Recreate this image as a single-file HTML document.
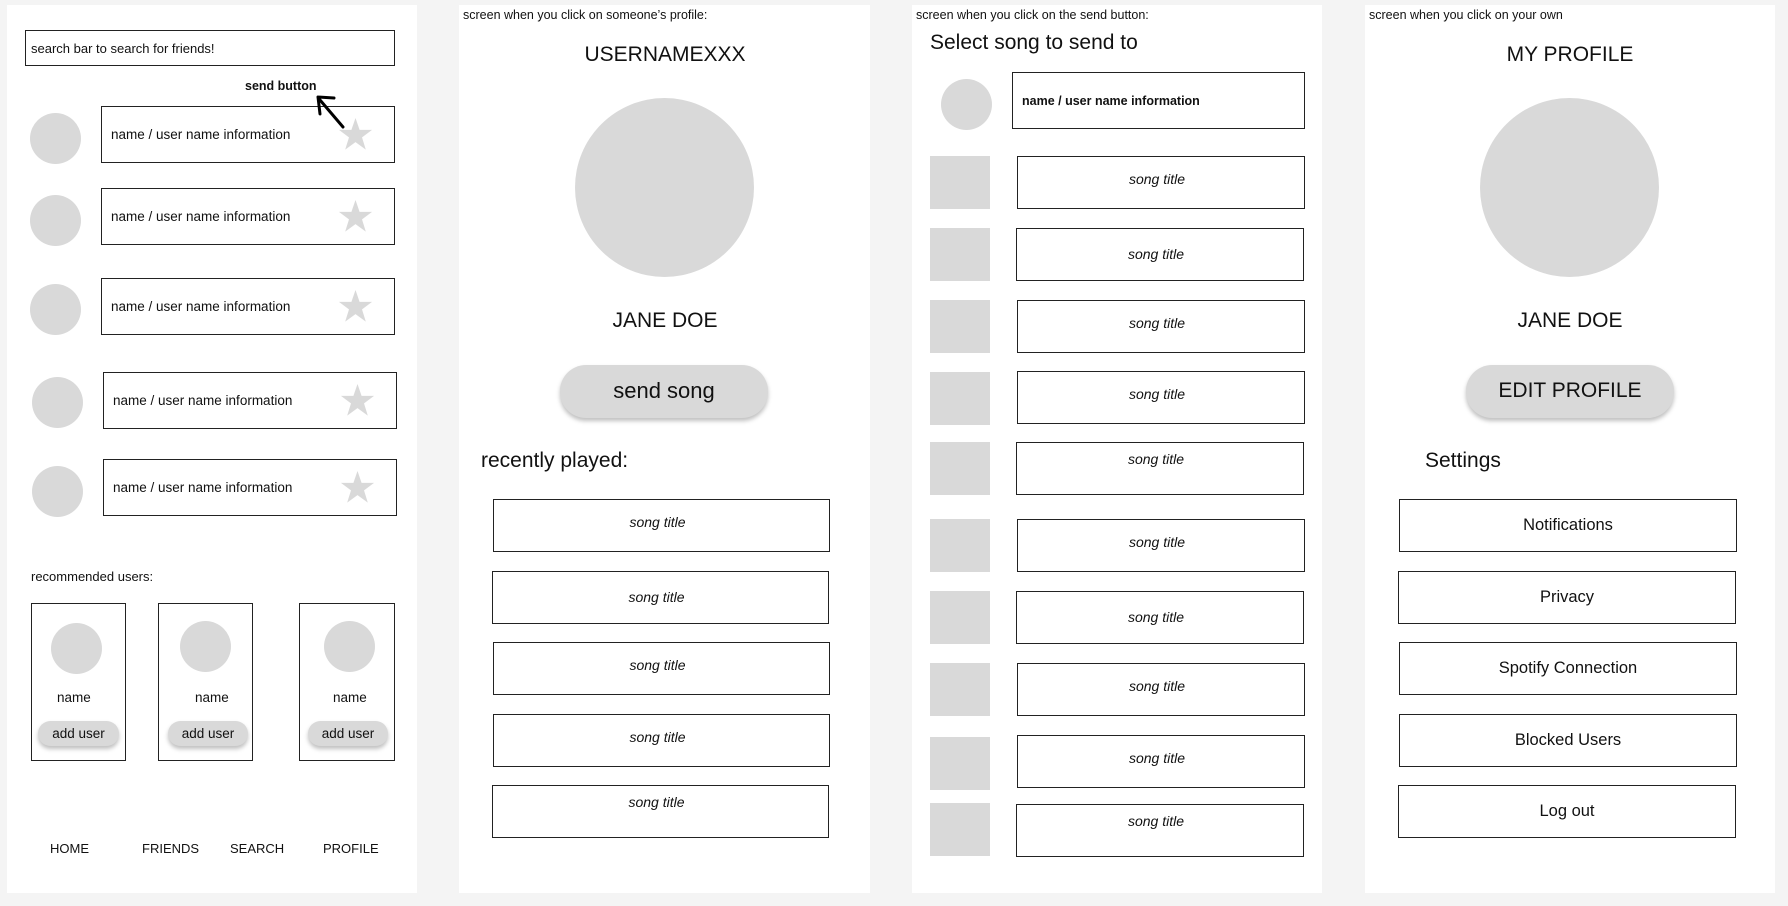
<!DOCTYPE html>
<html><head><meta charset="utf-8"><style>
*{margin:0;padding:0;box-sizing:border-box}
body{width:1788px;height:906px;background:#f4f4f4;position:relative;overflow:hidden;font-family:"Liberation Sans",Arial,sans-serif;color:#111}
.p{position:absolute;background:#fff;top:5px;height:888px}
.a{position:absolute}
.c{position:absolute;border-radius:50%;background:#d9d9d9}
.b{position:absolute;border:1.3px solid #222;background:#fff}
.t{position:absolute;white-space:nowrap}
.row{font-size:13.5px;display:flex;align-items:center;padding-left:9px}
.star{position:absolute;right:21px;top:10px;width:35px;height:35px}
.song{font-style:italic;font-size:14px;text-align:center;padding-top:14px;padding-right:8px}
.sq{position:absolute;background:#d9d9d9;left:930px;width:60px;height:53px}
.pill{position:absolute;background:#d9d9d9;border-radius:26px;box-shadow:0 3px 4px rgba(0,0,0,.25);text-align:center}
.set{font-size:16.5px;text-align:center;display:flex;align-items:center;justify-content:center}
</style></head><body>
<div class="p" style="left:7px;width:410px"></div>
<div class="p" style="left:459px;width:411px"></div>
<div class="p" style="left:912px;width:410px"></div>
<div class="p" style="left:1365px;width:410px"></div>

<!-- Panel 1 -->
<div class="b row" style="left:25px;top:30px;width:370px;height:36px;font-size:13px;padding-left:5px">search bar to search for friends!</div>
<div class="t" style="left:245px;top:79px;font-size:12.5px;font-weight:bold">send button</div>

<div class="c" style="left:30px;top:113px;width:51px;height:51px"></div>
<div class="b row" style="left:101px;top:106px;width:294px;height:57px">name / user name information<svg class="star" viewBox="0 0 36 36"><path d="M18 1 L22.2 13.2 L35 13.2 L24.7 20.9 L28.6 33.5 L18 25.8 L7.4 33.5 L11.3 20.9 L1 13.2 L13.8 13.2Z" fill="#d9d9d9"/></svg></div>
<div class="c" style="left:30px;top:195px;width:51px;height:51px"></div>
<div class="b row" style="left:101px;top:188px;width:294px;height:57px">name / user name information<svg class="star" viewBox="0 0 36 36"><path d="M18 1 L22.2 13.2 L35 13.2 L24.7 20.9 L28.6 33.5 L18 25.8 L7.4 33.5 L11.3 20.9 L1 13.2 L13.8 13.2Z" fill="#d9d9d9"/></svg></div>
<div class="c" style="left:30px;top:284px;width:51px;height:51px"></div>
<div class="b row" style="left:101px;top:278px;width:294px;height:57px">name / user name information<svg class="star" viewBox="0 0 36 36"><path d="M18 1 L22.2 13.2 L35 13.2 L24.7 20.9 L28.6 33.5 L18 25.8 L7.4 33.5 L11.3 20.9 L1 13.2 L13.8 13.2Z" fill="#d9d9d9"/></svg></div>
<div class="c" style="left:32px;top:377px;width:51px;height:51px"></div>
<div class="b row" style="left:103px;top:372px;width:294px;height:57px">name / user name information<svg class="star" viewBox="0 0 36 36"><path d="M18 1 L22.2 13.2 L35 13.2 L24.7 20.9 L28.6 33.5 L18 25.8 L7.4 33.5 L11.3 20.9 L1 13.2 L13.8 13.2Z" fill="#d9d9d9"/></svg></div>
<div class="c" style="left:32px;top:466px;width:51px;height:51px"></div>
<div class="b row" style="left:103px;top:459px;width:294px;height:57px">name / user name information<svg class="star" viewBox="0 0 36 36"><path d="M18 1 L22.2 13.2 L35 13.2 L24.7 20.9 L28.6 33.5 L18 25.8 L7.4 33.5 L11.3 20.9 L1 13.2 L13.8 13.2Z" fill="#d9d9d9"/></svg></div>
<svg class="a" style="left:0;top:0" width="420" height="200"><path d="M343 127 L320 100 M318 97 L320 114 M318 97 L334 98" stroke="#000" stroke-width="3" fill="none" stroke-linecap="round"/></svg>

<div class="t" style="left:31px;top:569px;font-size:13px">recommended users:</div>
<div class="b" style="left:31px;top:603px;width:95px;height:158px"></div>
<div class="b" style="left:158px;top:603px;width:95px;height:158px"></div>
<div class="b" style="left:299px;top:603px;width:96px;height:158px"></div>
<div class="c" style="left:51px;top:623px;width:51px;height:51px"></div>
<div class="c" style="left:180px;top:621px;width:51px;height:51px"></div>
<div class="c" style="left:324px;top:621px;width:51px;height:51px"></div>
<div class="t" style="left:57px;top:690px;font-size:13.5px">name</div>
<div class="t" style="left:195px;top:690px;font-size:13.5px">name</div>
<div class="t" style="left:333px;top:690px;font-size:13.5px">name</div>
<div class="pill" style="left:38px;top:721px;width:81px;height:25px;font-size:13.5px;line-height:25px">add user</div>
<div class="pill" style="left:168px;top:721px;width:80px;height:25px;font-size:13.5px;line-height:25px">add user</div>
<div class="pill" style="left:308px;top:721px;width:80px;height:25px;font-size:13.5px;line-height:25px">add user</div>
<div class="t" style="left:50px;top:841px;font-size:13px">HOME</div>
<div class="t" style="left:142px;top:841px;font-size:13px">FRIENDS</div>
<div class="t" style="left:230px;top:841px;font-size:13px">SEARCH</div>
<div class="t" style="left:323px;top:841px;font-size:13px">PROFILE</div>

<!-- Panel 2 -->
<div class="t" style="left:463px;top:8px;font-size:12.5px">screen when you click on someone’s profile:</div>
<div class="t" style="left:565px;top:43px;width:200px;text-align:center;font-size:21px">USERNAMEXXX</div>
<div class="c" style="left:575px;top:98px;width:179px;height:179px"></div>
<div class="t" style="left:565px;top:309px;width:200px;text-align:center;font-size:21px">JANE DOE</div>
<div class="pill" style="left:560px;top:365px;width:208px;height:53px;font-size:22px;line-height:52px">send song</div>
<div class="t" style="left:481px;top:449px;font-size:21px">recently played:</div>
<div class="b song" style="left:493px;top:499px;width:337px;height:53px">song title</div>
<div class="b song" style="left:492px;top:571px;width:337px;height:53px;padding-top:17px">song title</div>
<div class="b song" style="left:493px;top:642px;width:337px;height:53px">song title</div>
<div class="b song" style="left:493px;top:714px;width:337px;height:53px">song title</div>
<div class="b song" style="left:492px;top:785px;width:337px;height:53px;padding-top:8px">song title</div>

<!-- Panel 3 -->
<div class="t" style="left:916px;top:8px;font-size:12.5px">screen when you click on the send button:</div>
<div class="t" style="left:930px;top:31px;font-size:21px">Select song to send to</div>
<div class="c" style="left:941px;top:79px;width:51px;height:51px"></div>
<div class="b row" style="left:1012px;top:72px;width:293px;height:57px;font-weight:bold;font-size:12.5px">name / user name information</div>
<div class="sq" style="top:156px"></div><div class="b song" style="left:1017px;top:156px;width:288px;height:53px">song title</div>
<div class="sq" style="top:228px"></div><div class="b song" style="left:1016px;top:228px;width:288px;height:53px;padding-top:17px">song title</div>
<div class="sq" style="top:300px"></div><div class="b song" style="left:1017px;top:300px;width:288px;height:53px">song title</div>
<div class="sq" style="top:372px"></div><div class="b song" style="left:1017px;top:371px;width:288px;height:53px">song title</div>
<div class="sq" style="top:442px"></div><div class="b song" style="left:1016px;top:442px;width:288px;height:53px;padding-top:8px">song title</div>
<div class="sq" style="top:519px"></div><div class="b song" style="left:1017px;top:519px;width:288px;height:53px">song title</div>
<div class="sq" style="top:591px"></div><div class="b song" style="left:1016px;top:591px;width:288px;height:53px;padding-top:17px">song title</div>
<div class="sq" style="top:663px"></div><div class="b song" style="left:1017px;top:663px;width:288px;height:53px">song title</div>
<div class="sq" style="top:737px"></div><div class="b song" style="left:1017px;top:735px;width:288px;height:53px">song title</div>
<div class="sq" style="top:803px"></div><div class="b song" style="left:1016px;top:804px;width:288px;height:53px;padding-top:8px">song title</div>

<!-- Panel 4 -->
<div class="t" style="left:1369px;top:8px;font-size:12.5px">screen when you click on your own</div>
<div class="t" style="left:1470px;top:43px;width:200px;text-align:center;font-size:21px">MY PROFILE</div>
<div class="c" style="left:1480px;top:98px;width:179px;height:179px"></div>
<div class="t" style="left:1470px;top:309px;width:200px;text-align:center;font-size:21px">JANE DOE</div>
<div class="pill" style="left:1466px;top:365px;width:208px;height:53px;font-size:21px;line-height:52px">EDIT PROFILE</div>
<div class="t" style="left:1425px;top:449px;font-size:21px">Settings</div>
<div class="b set" style="left:1399px;top:499px;width:338px;height:53px">Notifications</div>
<div class="b set" style="left:1398px;top:571px;width:338px;height:53px">Privacy</div>
<div class="b set" style="left:1399px;top:642px;width:338px;height:53px">Spotify Connection</div>
<div class="b set" style="left:1399px;top:714px;width:338px;height:53px">Blocked Users</div>
<div class="b set" style="left:1398px;top:785px;width:338px;height:53px">Log out</div>
</body></html>
